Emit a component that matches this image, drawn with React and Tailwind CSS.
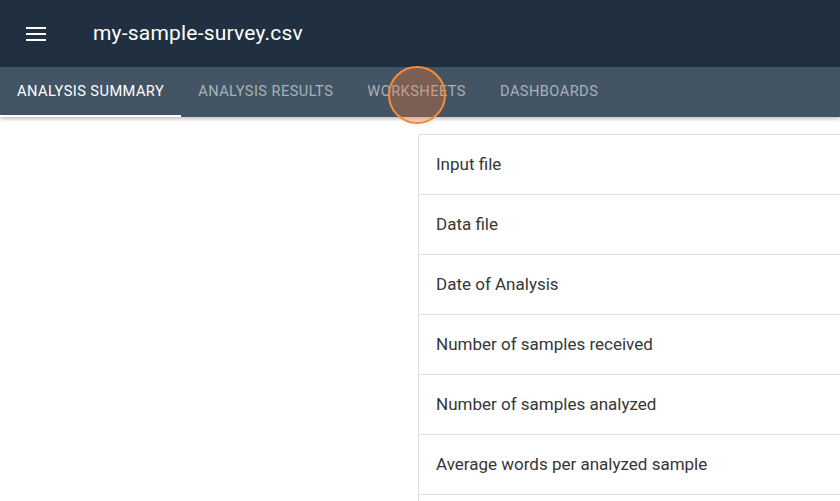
import React from 'react';

const tabs = ['Analysis Summary', 'Analysis Results', 'Worksheets', 'Dashboards'];

const rows = [
  'Input file',
  'Data file',
  'Date of Analysis',
  'Number of samples received',
  'Number of samples analyzed',
  'Average words per analyzed sample',
  '',
];

const App = () => {
  return (
    <div className="w-[840px] h-[501px] overflow-hidden bg-white flex flex-col" style={{ fontFamily: 'Roboto, "Liberation Sans", sans-serif' }}>
      <header className="bg-[#203040] h-[67px] flex items-center shrink-0">
        <button className="w-[20px] ml-[26px] flex flex-col gap-[4px]">
          <span className="block h-[2px] bg-white"></span>
          <span className="block h-[2px] bg-white"></span>
          <span className="block h-[2px] bg-white"></span>
        </button>
        <h1 className="ml-[47px] text-white text-[21px] tracking-[0.2px]">my-sample-survey.csv</h1>
      </header>

      <nav className="relative bg-[#435564] h-[50px] flex shrink-0 shadow-[0_2px_4px_rgba(0,0,0,0.25)] z-10">
        {tabs.map((t, i) => (
          <div
            key={t}
            className={
              'relative px-[17px] flex items-center uppercase text-[14.6px] tracking-[0.45px] ' +
              (i === 0 ? 'text-white' : 'text-[#a6b1ba]')
            }
          >
            {t}
            {i === 0 && <span className="absolute left-0 right-0 bottom-0 h-[2px] bg-white"></span>}
          </div>
        ))}
        <span className="absolute left-[388px] top-[-1px] w-[58px] h-[58px] rounded-full border-2 border-[#f68b3a] bg-[#ff7832]/30"></span>
      </nav>

      <main className="flex-1 flex pt-[17px] pl-[418px]">
        <div className="flex-1 border-l border-t border-[#dedede] rounded-tl-[4px]">
          {rows.map((r, i) => (
            <div key={i} className="h-[60px] border-b border-[#e0e0e0] flex items-center pl-[17px] text-[17px] text-[#363636]">
              {r}
            </div>
          ))}
        </div>
      </main>
    </div>
  );
};

export default App;
